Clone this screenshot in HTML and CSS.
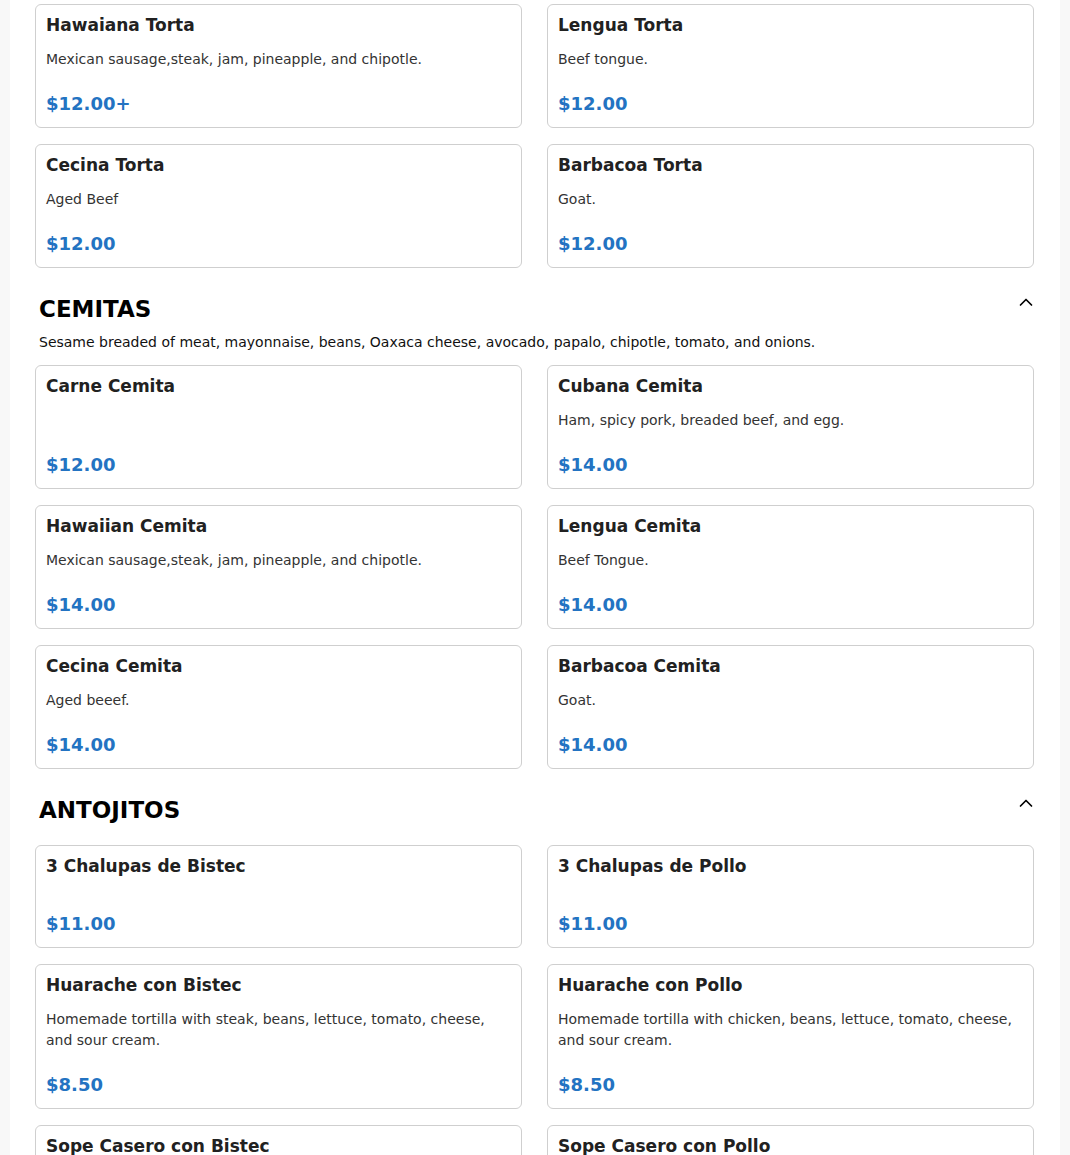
FILE: index.html
```html
<!DOCTYPE html>
<html lang="en">
<head>
<meta charset="utf-8">
<title>Menu</title>
<link rel="stylesheet" href="styles.css">
</head>
<body>
<main class="menu">
  <section class="section section-first">
    <div class="grid">
      <article class="card"><h3 class="card-title">Hawaiana Torta</h3><p class="card-desc">Mexican sausage,steak, jam, pineapple, and chipotle.</p><p class="card-price">$12.00+</p></article>
      <article class="card"><h3 class="card-title">Lengua Torta</h3><p class="card-desc">Beef tongue.</p><p class="card-price">$12.00</p></article>
      <article class="card"><h3 class="card-title">Cecina Torta</h3><p class="card-desc">Aged Beef</p><p class="card-price">$12.00</p></article>
      <article class="card"><h3 class="card-title">Barbacoa Torta</h3><p class="card-desc">Goat.</p><p class="card-price">$12.00</p></article>
    </div>
  </section>

  <section class="section">
    <div class="section-head">
      <h2 class="section-title">CEMITAS</h2>
      <svg class="chevron" viewBox="0 0 14 10" width="14" height="10"><path d="M1.5 8 L7 2.5 L12.5 8" fill="none" stroke="#000" stroke-width="1.7" stroke-linecap="round" stroke-linejoin="round"/></svg>
    </div>
    <p class="section-desc">Sesame breaded of meat, mayonnaise, beans, Oaxaca cheese, avocado, papalo, chipotle, tomato, and onions.</p>
    <div class="grid">
      <article class="card"><h3 class="card-title">Carne Cemita</h3><p class="card-desc"></p><p class="card-price">$12.00</p></article>
      <article class="card"><h3 class="card-title">Cubana Cemita</h3><p class="card-desc">Ham, spicy pork, breaded beef, and egg.</p><p class="card-price">$14.00</p></article>
      <article class="card"><h3 class="card-title">Hawaiian Cemita</h3><p class="card-desc">Mexican sausage,steak, jam, pineapple, and chipotle.</p><p class="card-price">$14.00</p></article>
      <article class="card"><h3 class="card-title">Lengua Cemita</h3><p class="card-desc">Beef Tongue.</p><p class="card-price">$14.00</p></article>
      <article class="card"><h3 class="card-title">Cecina Cemita</h3><p class="card-desc">Aged beeef.</p><p class="card-price">$14.00</p></article>
      <article class="card"><h3 class="card-title">Barbacoa Cemita</h3><p class="card-desc">Goat.</p><p class="card-price">$14.00</p></article>
    </div>
  </section>

  <section class="section">
    <div class="section-head section-head-nodesc">
      <h2 class="section-title">ANTOJITOS</h2>
      <svg class="chevron" viewBox="0 0 14 10" width="14" height="10"><path d="M1.5 8 L7 2.5 L12.5 8" fill="none" stroke="#000" stroke-width="1.7" stroke-linecap="round" stroke-linejoin="round"/></svg>
    </div>
    <div class="grid">
      <article class="card"><h3 class="card-title">3 Chalupas de Bistec</h3><p class="card-price">$11.00</p></article>
      <article class="card"><h3 class="card-title">3 Chalupas de Pollo</h3><p class="card-price">$11.00</p></article>
      <article class="card"><h3 class="card-title">Huarache con Bistec</h3><p class="card-desc">Homemade tortilla with steak, beans, lettuce, tomato, cheese, and sour cream.</p><p class="card-price">$8.50</p></article>
      <article class="card"><h3 class="card-title">Huarache con Pollo</h3><p class="card-desc">Homemade tortilla with chicken, beans, lettuce, tomato, cheese, and sour cream.</p><p class="card-price">$8.50</p></article>
      <article class="card"><h3 class="card-title">Sope Casero con Bistec</h3><p class="card-desc">Homemade sope with steak, beans, lettuce, tomato, cheese, and sour cream.</p><p class="card-price">$8.50</p></article>
      <article class="card"><h3 class="card-title">Sope Casero con Pollo</h3><p class="card-desc">Homemade sope with chicken, beans, lettuce, tomato, cheese, and sour cream.</p><p class="card-price">$8.50</p></article>
    </div>
  </section>
</main>
</body>
</html>
```

FILE: styles.css
```css
html, body {
  margin: 0;
  padding: 0;
}

body {
  background: #f8f8f8;
  font-family: "DejaVu Sans", Verdana, sans-serif;
  color: #212529;
}

.menu {
  width: 1050px;
  margin: 0 auto;
  background: #ffffff;
  padding: 4px 26px 40px 25px;
  box-sizing: border-box;
  min-height: 1155px;
}

.section {
  margin-top: 27px;
}

.section-first {
  margin-top: 0;
}

.section-head {
  display: flex;
  justify-content: space-between;
  align-items: flex-start;
  padding-left: 4px;
}

.section-head-nodesc {
  margin-bottom: 21px;
}

.section-title {
  margin: 0;
  font-size: 23px;
  line-height: 28px;
  font-weight: bold;
  color: #000;
}

.chevron {
  display: block;
  margin-top: 2px;
  margin-right: 1px;
}

.section-desc {
  margin: 9px 0 12px;
  padding-left: 4px;
  font-size: 14px;
  line-height: 21px;
  color: #111;
}

.grid {
  display: grid;
  grid-template-columns: 1fr 1fr;
  column-gap: 25px;
  row-gap: 16px;
}

.card {
  display: flex;
  flex-direction: column;
  border: 1px solid #cfcfcf;
  border-radius: 6px;
  padding: 9px 10px 12px;
  background: #fff;
}

.card-title {
  margin: 0 0 13px;
  font-size: 17px;
  line-height: 22px;
  font-weight: bold;
  color: #212121;
}

.card-desc {
  margin: 0;
  font-size: 14px;
  line-height: 21px;
  min-height: 21px;
  color: #333;
}

.card-price {
  margin: 23px 0 0;
  font-size: 18px;
  line-height: 22px;
  font-weight: bold;
  color: #2373c2;
}
```
